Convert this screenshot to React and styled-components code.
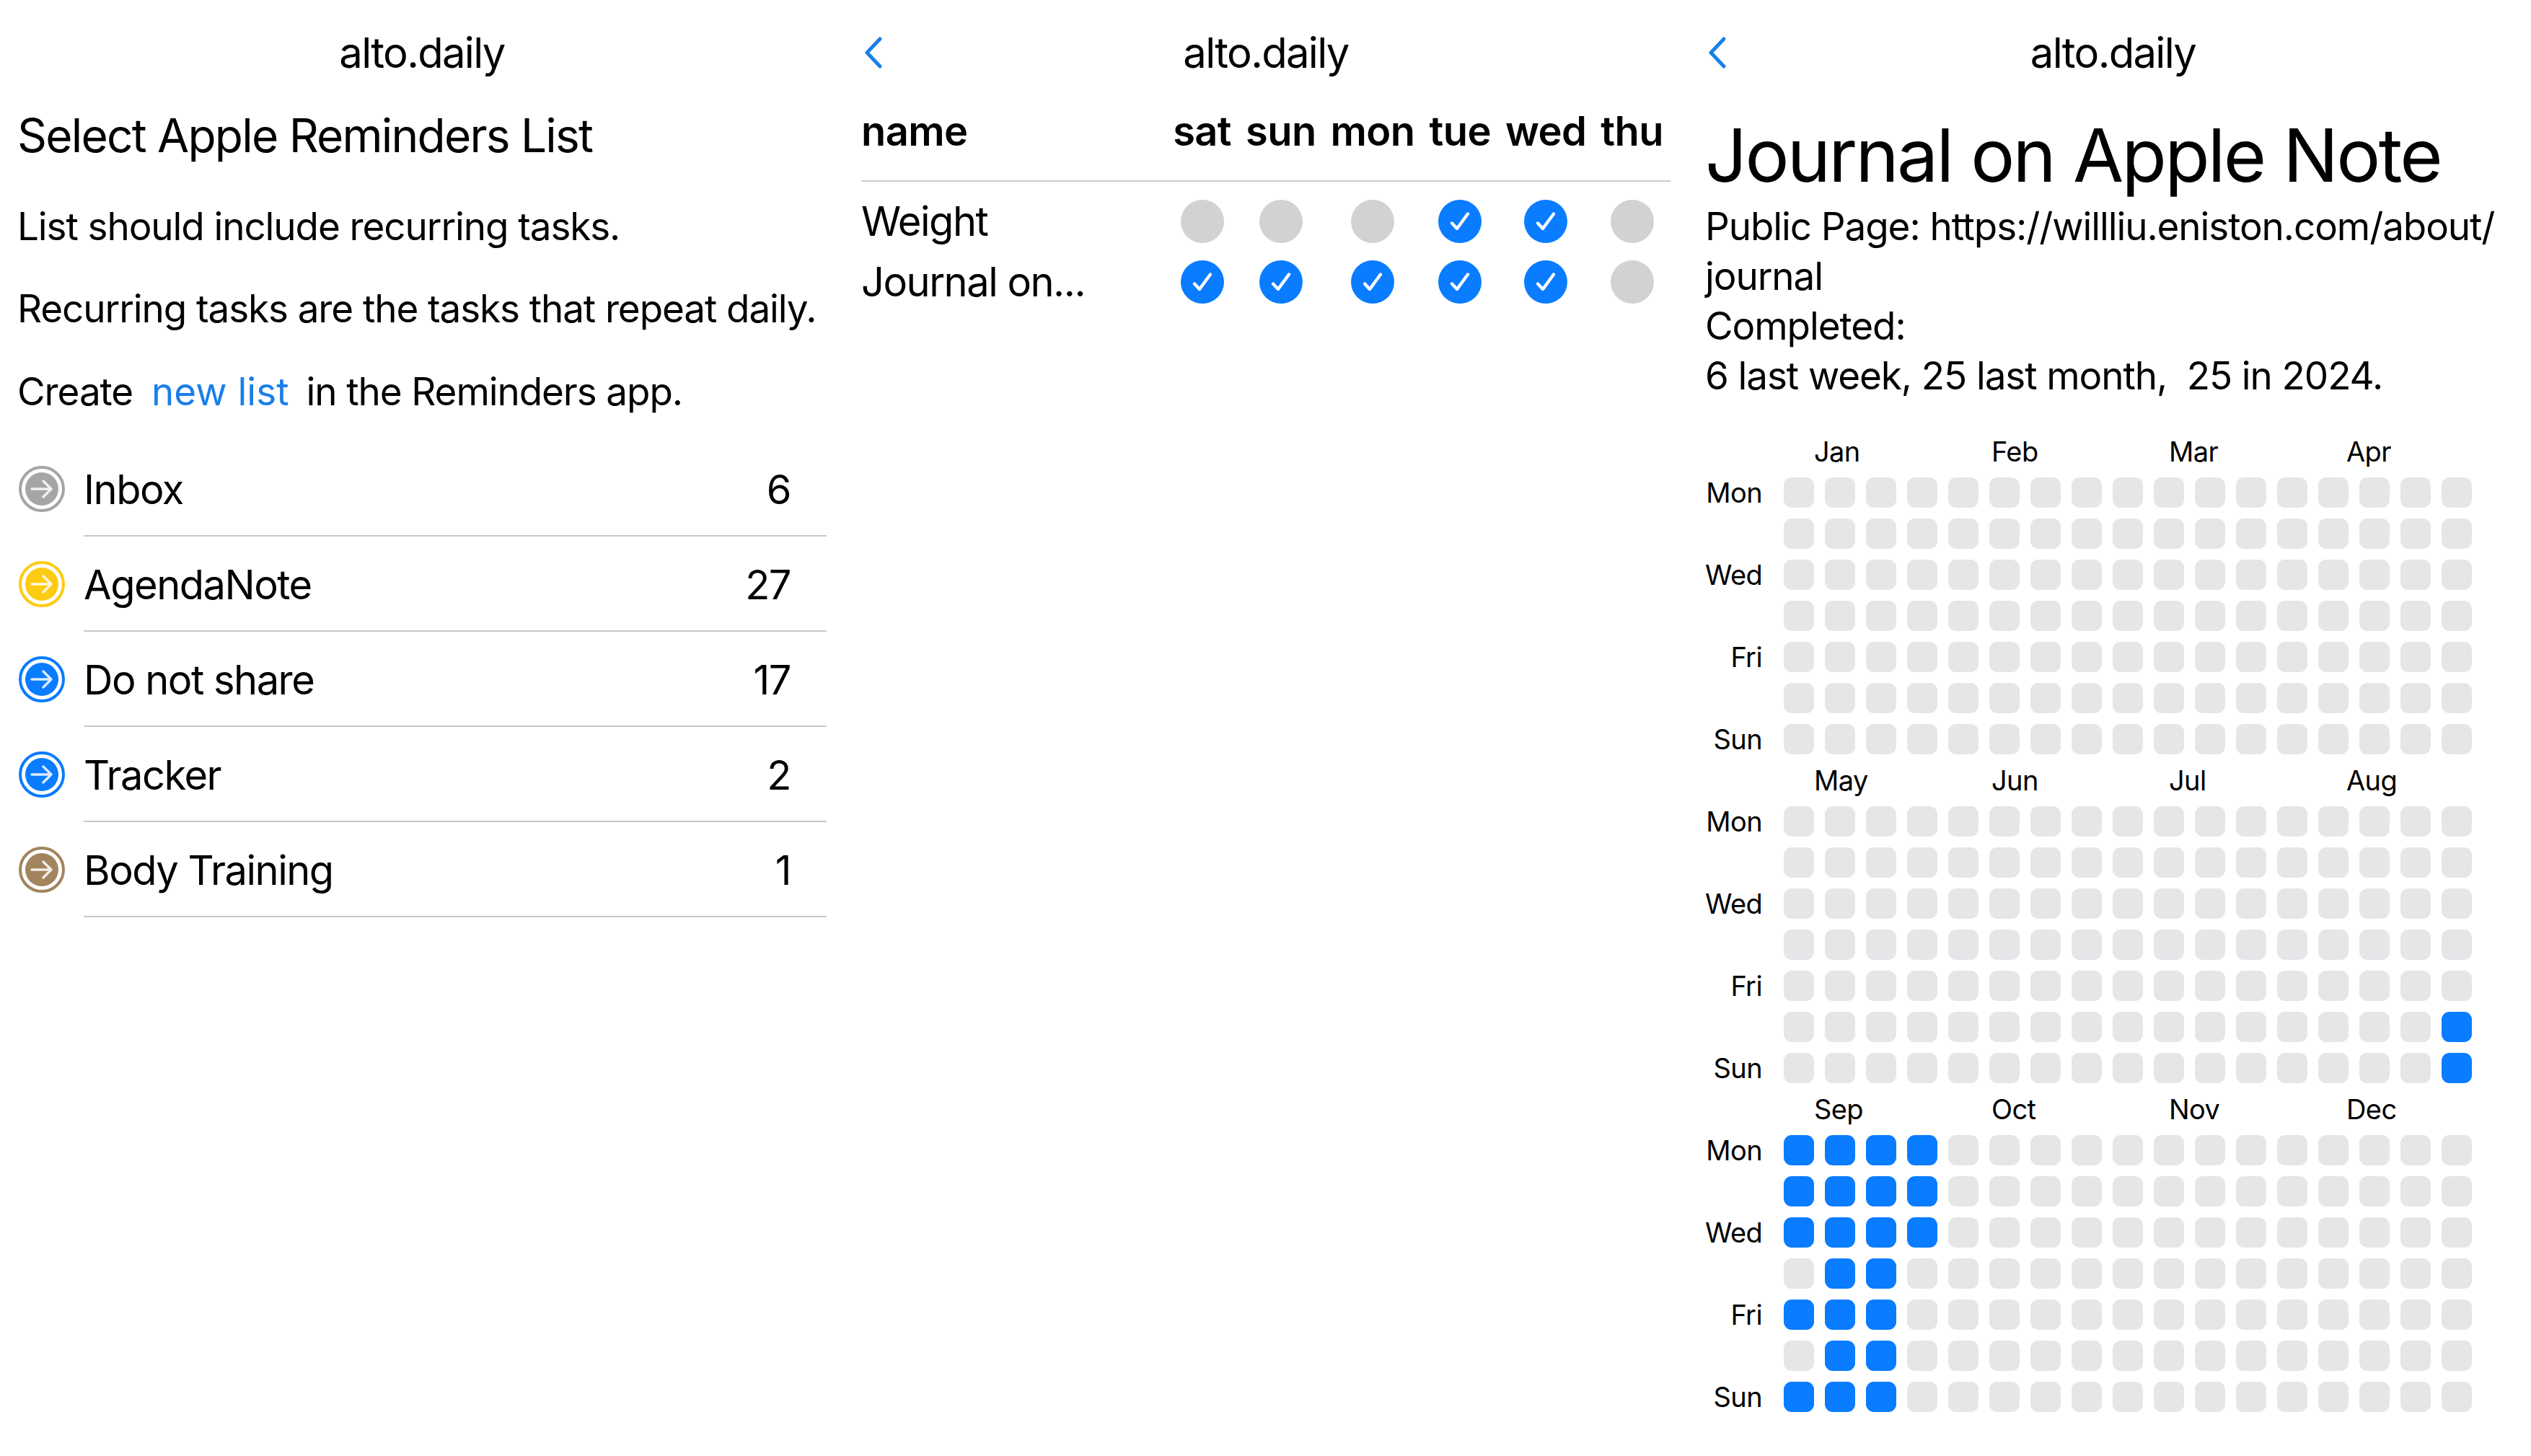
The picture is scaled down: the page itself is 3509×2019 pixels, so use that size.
import React from 'react';
import styled, { createGlobalStyle } from 'styled-components';

const GlobalStyle = createGlobalStyle`
  html, body { margin: 0; padding: 0; background: #fff; }
  body { font-family: Inter, "Noto Sans", sans-serif; color: #000; }
`;

const BLUE = '#0a7cff';

const Page = styled.div`
  display: grid;
  grid-template-columns: 1170px 1170px 1169px;
  width: 3509px;
  height: 2019px;
  overflow: hidden;
`;

const Panel = styled.section`
  display: flex;
  flex-direction: column;
  padding: 0 24px;
  min-width: 0;
`;

const Bar = styled.header`
  display: grid;
  grid-template-columns: 1fr auto 1fr;
  align-items: center;
  height: 146px;
  margin-left: ${p => p.$shift || 0}px;
  font-size: 58px;
  letter-spacing: -1.7px;
`;

const Back = styled.svg`
  width: 26px;
  height: 44px;
  margin-left: ${p => p.$shift || 0}px;
  fill: none;
  stroke: #1a7fe8;
  stroke-width: 5;
  stroke-linecap: round;
  stroke-linejoin: round;
`;

const SmallTitle = styled.h2`
  margin: 0;
  font-size: 64px;
  font-weight: 400;
  line-height: 84px;
  letter-spacing: -1.8px;
  white-space: nowrap;
`;

const Para = styled.p`
  margin: ${p => p.$top}px 0 0;
  font-size: 53px;
  line-height: 64px;
  letter-spacing: -1.1px;
  white-space: nowrap;
`;

const Link = styled.span`
  color: #1a7fe8;
  margin: 0 24px 0 11px;
  letter-spacing: 0;
`;

const List = styled.ul`
  list-style: none;
  margin: 37px 0 0 2px;
  padding: 0;
`;

const Item = styled.li`
  display: flex;
  align-items: center;
  height: 132px;
  gap: 26px;
`;

const Ring = styled.span`
  flex: none;
  display: flex;
  align-items: center;
  justify-content: center;
  box-sizing: border-box;
  width: 64px;
  height: 64px;
  border-radius: 50%;
  border: 4px solid ${p => p.$color};
`;

const Dot = styled.span`
  display: flex;
  align-items: center;
  justify-content: center;
  width: 46px;
  height: 46px;
  border-radius: 50%;
  background: ${p => p.$color};
`;

const Arrow = styled.svg`
  width: 32px;
  height: 32px;
  fill: none;
  stroke: #fff;
  stroke-width: 3.4;
  stroke-linecap: round;
  stroke-linejoin: round;
  opacity: 0.85;
`;

const ItemBody = styled.div`
  flex: 1;
  align-self: stretch;
  display: flex;
  align-items: center;
  justify-content: space-between;
  padding: 3px 50px 0 0;
  border-bottom: 2px solid #c9c9cc;
  font-size: 56px;
  letter-spacing: -1.5px;
`;

const Table = styled.div`
  display: grid;
  grid-template-columns: 1fr repeat(6, auto);
  column-gap: 20px;
  justify-items: center;
  align-items: center;
  padding-right: 10px;
`;

const HeadCell = styled.div`
  box-sizing: border-box;
  padding-top: 4px;
  font-size: 56px;
  font-weight: 600;
  line-height: 64px;
  height: 104px;
  letter-spacing: -0.6px;
  ${p => p.$name && 'justify-self: start;'}
`;

const Rule = styled.div`
  grid-column: 1 / -1;
  justify-self: stretch;
  height: 2px;
  background: #c9c9cc;
  margin: 0 -10px 13px 0;
`;

const RowName = styled.div`
  justify-self: start;
  font-size: 56px;
  line-height: 84px;
  height: 84px;
  letter-spacing: -1.5px;
`;

const Tick = styled.span`
  display: flex;
  align-items: center;
  justify-content: center;
  width: 60px;
  height: 60px;
  border-radius: 50%;
  background: ${p => (p.$on ? BLUE : '#d2d2d5')};
`;

const TickMark = styled.svg`
  width: 30px;
  height: 30px;
  fill: none;
  stroke: #fff;
  stroke-width: 4.4;
  stroke-linecap: round;
  stroke-linejoin: round;
`;

const BigTitle = styled.h1`
  margin: 6px 0 0;
  font-size: 102px;
  font-weight: 400;
  line-height: 126px;
  letter-spacing: -2.8px;
  white-space: nowrap;
`;

const Info = styled.div`
  margin-top: 2px;
  font-size: 53px;
  line-height: 69px;
  letter-spacing: -1.1px;
  white-space: pre;
`;

const Heat = styled.div`
  display: grid;
  grid-template-columns: 94px repeat(17, 42px);
  grid-auto-rows: 42px;
  gap: 15px;
  align-items: center;
  margin-top: 49px;
`;

const Months = styled.div`
  grid-column: 2 / -1;
  display: flex;
  padding-left: 42px;
`;

const Month = styled.span`
  width: 246px;
  flex: none;
  font-size: 38px;
  letter-spacing: -0.6px;
`;

const DayLabel = styled.span`
  grid-column: 1;
  text-align: right;
  padding-right: 15px;
  font-size: 38px;
  letter-spacing: -0.6px;
  white-space: nowrap;
`;

const Cell = styled.span`
  height: 42px;
  border-radius: 11px;
  background: ${p => (p.$on ? BLUE : '#e6e6e9')};
`;

const lists = [
  { name: 'Inbox', count: 6, color: '#a5a5a7' },
  { name: 'AgendaNote', count: 27, color: '#fdcb12' },
  { name: 'Do not share', count: 17, color: BLUE },
  { name: 'Tracker', count: 2, color: BLUE },
  { name: 'Body Training', count: 1, color: '#a2845e' },
];

const days = ['sat', 'sun', 'mon', 'tue', 'wed', 'thu'];
const habits = [
  { name: 'Weight', done: [0, 0, 0, 1, 1, 0] },
  { name: 'Journal on...', done: [1, 1, 1, 1, 1, 0] },
];

const dayLabels = ['Mon', '', 'Wed', '', 'Fri', '', 'Sun'];

// filled cells per block, row -> columns
const blocks = [
  { months: ['Jan', 'Feb', 'Mar', 'Apr'], filled: {} },
  { months: ['May', 'Jun', 'Jul', 'Aug'], filled: { 5: [16], 6: [16] } },
  {
    months: ['Sep', 'Oct', 'Nov', 'Dec'],
    filled: {
      0: [0, 1, 2, 3],
      1: [0, 1, 2, 3],
      2: [0, 1, 2, 3],
      3: [1, 2],
      4: [0, 1, 2],
      5: [1, 2],
      6: [0, 1, 2],
    },
  },
];

const Chevron = ({ shift }) => (
  <Back viewBox="0 0 26 44" $shift={shift}>
    <path d="M22 3 L4 22 L22 41" />
  </Back>
);

const ListRow = ({ name, count, color }) => (
  <Item>
    <Ring $color={color}>
      <Dot $color={color}>
        <Arrow viewBox="0 0 32 32">
          <path d="M2 16 H29 M18 5 L29 16 L18 27" />
        </Arrow>
      </Dot>
    </Ring>
    <ItemBody>
      <span>{name}</span>
      <span>{count}</span>
    </ItemBody>
  </Item>
);

export default function App() {
  return (
    <Page>
      <GlobalStyle />

      <Panel>
        <Bar>
          <span />
          <span>alto.daily</span>
        </Bar>
        <SmallTitle>Select Apple Reminders List</SmallTitle>
        <Para $top={52}>List should include recurring tasks.</Para>
        <Para $top={50}>Recurring tasks are the tasks that repeat daily.</Para>
        <Para $top={51}>
          Create<Link> new list</Link>in the Reminders app.
        </Para>
        <List>
          {lists.map(l => (
            <ListRow key={l.name} {...l} />
          ))}
        </List>
      </Panel>

      <Panel>
        <Bar>
          <Chevron shift={4} />
          <span>alto.daily</span>
        </Bar>
        <Table>
          <HeadCell $name>name</HeadCell>
          {days.map(d => (
            <HeadCell key={d}>{d}</HeadCell>
          ))}
          <Rule />
          {habits.map(h => (
            <React.Fragment key={h.name}>
              <RowName>{h.name}</RowName>
              {h.done.map((on, i) => (
                <Tick key={i} $on={on}>
                  {on ? (
                    <TickMark viewBox="0 0 30 30">
                      <path d="M4 17.5 L11 25 L26 4.5" />
                    </TickMark>
                  ) : null}
                </Tick>
              ))}
            </React.Fragment>
          ))}
        </Table>
      </Panel>

      <Panel>
        <Bar $shift={10}>
          <Chevron shift={-6} />
          <span>alto.daily</span>
        </Bar>
        <BigTitle>Journal on Apple Note</BigTitle>
        <Info>
          {'Public Page: https://willliu.eniston.com/about/\njournal\nCompleted:\n6 last week, 25 last month,  25 in 2024.'}
        </Info>
        <Heat>
          {blocks.map(b => (
            <React.Fragment key={b.months[0]}>
              <Months>
                {b.months.map(m => (
                  <Month key={m}>{m}</Month>
                ))}
              </Months>
              {dayLabels.map((label, row) => (
                <React.Fragment key={row}>
                  <DayLabel>{label}</DayLabel>
                  {Array.from({ length: 17 }, (_, col) => (
                    <Cell key={col} $on={(b.filled[row] || []).includes(col)} />
                  ))}
                </React.Fragment>
              ))}
            </React.Fragment>
          ))}
        </Heat>
      </Panel>
    </Page>
  );
}
